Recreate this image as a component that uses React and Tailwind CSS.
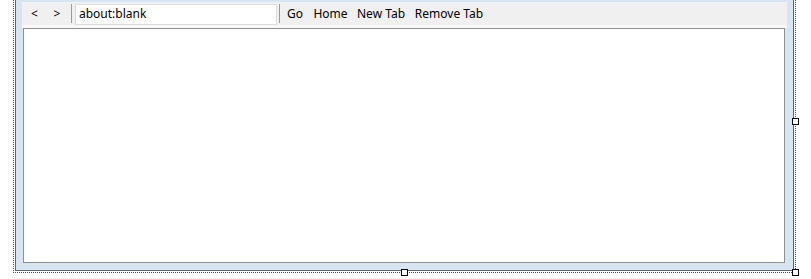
import React from "react";

const Handle = ({ className }) => (
  <div className={`absolute w-[7px] h-[7px] bg-white border border-black ${className}`} />
);

const ToolButton = ({ label, width }) => (
  <div className={`${width} h-full flex items-center justify-center text-[12px] text-black`}>
    {label}
  </div>
);

const App = () => {
  return (
    <div className="relative w-[811px] h-[279px] bg-white font-['Noto_Sans',sans-serif] overflow-hidden">
      {/* Selection frame */}
      <div className="ml-[13px] w-[783px] h-[273px] border-x border-b border-dotted border-[#555555] px-px pb-px">
        {/* Form */}
        <div className="h-full border-x border-b border-[#646464] bg-[#d7e4f2] pt-[2px] pl-[6px] pr-[6px] pb-[7px] flex flex-col">
          {/* Tool strip */}
          <div className="h-[23px] shrink-0 bg-[#f0f0f0] flex items-center pl-px">
            <ToolButton label="<" width="w-[23px]" />
            <ToolButton label=">" width="w-[22px]" />
            <div className="ml-[3px] w-px h-[19px] bg-[#9a9a9a]" />
            <div className="ml-[3px] w-[202px] h-[21px] mt-[1px] bg-white border border-[#dcdcdc] flex items-center pl-[3px] text-[12px] text-black">
              about:blank
            </div>
            <div className="ml-[2px] w-px h-[19px] bg-[#9a9a9a]" />
            <div className="ml-[2px] flex h-full">
              <ToolButton label="Go" width="w-[26px]" />
              <ToolButton label="Home" width="w-[45px]" />
              <ToolButton label="New Tab" width="w-[56px]" />
              <ToolButton label="Remove Tab" width="w-[80px]" />
            </div>
          </div>
          <div className="h-[3px] shrink-0 bg-[#f8f8f8]" />
          {/* Web browser */}
          <div className="flex-1 ml-px mr-[2px] border border-[#8e8f8f] bg-white" />
        </div>
      </div>

      <Handle className="left-[792px] top-[118px]" />
      <Handle className="left-[401px] top-[269px]" />
      <Handle className="left-[792px] top-[269px]" />
    </div>
  );
};

export default App;
